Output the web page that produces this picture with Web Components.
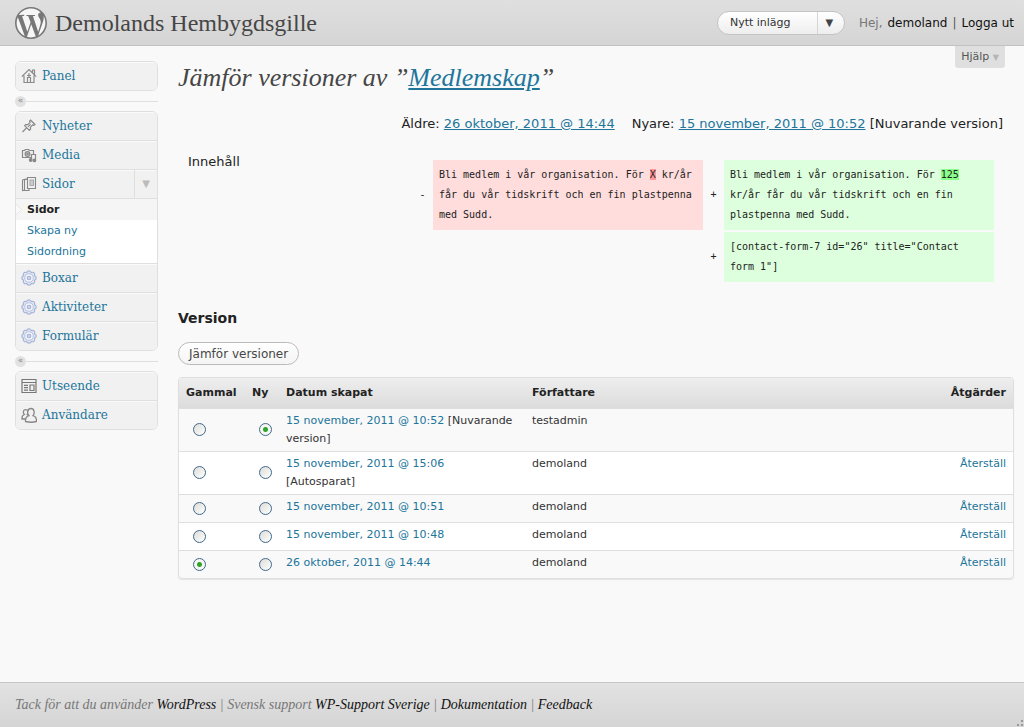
<!DOCTYPE html>
<html lang="sv">
<head>
<meta charset="utf-8">
<meta name="viewport" content="width=device-width, initial-scale=1">
<title>Jämför versioner ‹ Demolands Hembygdsgille</title>
<style>
  html, body { margin: 0; }
  body {
    --link: #21759b;
    --edge: #dfdfdf;
    --serif: "Liberation Serif", Georgia, serif;
    --slab: "DejaVu Serif", Georgia, serif;
    --sans: "DejaVu Sans", Verdana, sans-serif;
    --mono: "DejaVu Sans Mono", Consolas, monospace;
    background: #f9f9f9;
    color: #333;
    font: 11px/18px var(--sans);
  }
</style>
</head>
<body>
<admin-page></admin-page>

<script>
// markup is a string, or a function that builds it from the host element
const define = (name, markup) => customElements.define(name, class extends HTMLElement {
  connectedCallback() {
    if (this.shadowRoot) return;
    const template = document.createElement('template');
    template.innerHTML = typeof markup === 'function' ? markup(this) : markup;
    this.attachShadow({ mode: 'open' }).append(template.content.cloneNode(true));
  }
});

const ICONS = {
  home: `<g fill="none" stroke="#8a8a8a" stroke-width="1.2"><path d="M.8 8.700 8 1.500 15.200 8.700M3 7.500V14.500H13V7.500M11.500 4.500V2H13.500V7"/><path d="M6.500 14.500V9.500H9.500V14.500M6 7.500H10M8 5V9"/></g>`,
  pin: `<g fill="#f1f1f1" stroke="#888" stroke-width="1.2" stroke-linejoin="round"><path d="M1.500 14 6 9.300"/><path d="M9.500 2 14 6.500 12.600 7.400 11.600 6.800 9.400 9.400 9.600 11.200 8.400 12.400 3.600 7.600 4.900 6.500 6.700 6.600 9.200 4.400 8.600 3.200Z"/><path d="M7 8.800 9.600 6.400"/></g>`,
  media: `<g fill="none" stroke="#888" stroke-width="1.2"><path d="M1.500 3.500H3.500L4.500 2.500H7.500L8.500 3.500H12.500V10.500H1.500Z"/><circle cx="6.500" cy="7" r="2.400"/><circle cx="6.500" cy="7" r=".8"/><path d="M10.500 12.500V7.500H14.500V13" fill="#f1f1f1"/><circle cx="9.700" cy="13" r="1.300" fill="#888"/><circle cx="13.400" cy="13.400" r="1.300" fill="#888"/></g>`,
  pages: `<g fill="#f1f1f1" stroke="#888" stroke-width="1.1"><path d="M1.5 4 5 3V14L1.5 14.5Z"/><path d="M3.5 3.5H8V14.5H3.5Z"/><path d="M6.5 1.5H14.5V12.5H6.5Z"/><path d="M9 4H12.5V9.5H9Z" fill="#cfcfcf" stroke="#aaa"/></g>`,
  gear: `<g fill="#dfe5f4" stroke="#a3b1d3" stroke-width="1.1" stroke-linejoin="round"><path d="M8 .8Q9.800 1 10.300 2.500 12.200 1.800 13.100 2.900 14.200 4 13.500 5.700 15.200 6.300 15.200 8T13.500 10.300Q14.200 12 13.100 13.100 12 14.200 10.300 13.500 9.700 15.200 8 15.200T5.700 13.500Q4 14.200 2.900 13.100 1.800 12 2.500 10.300.8 9.700.8 8T2.500 5.700Q1.800 4 2.900 2.900 4 1.800 5.700 2.500 6.300.8 8 .8Z"/><circle cx="8" cy="8" r="4.300" fill="#f4f6fb" stroke="#b9c4df"/><circle cx="8" cy="8" r="1.800" fill="#cdd6ec"/></g>`,
  layout: `<g fill="none" stroke="#777" stroke-width="1.2"><path d="M1 1.5H15V14.5H1ZM1 4.5H15"/><path d="M9 7H13V12.5H9Z"/><path d="M3 7.3H7M3 9.7H7M3 12.1H7"/></g>`,
  users: `<g fill="#f1f1f1" stroke="#888" stroke-width="1.3"><path d="M1 12C.8 9.5 2 8 3.3 7.5 1.5 5.5 2.3 2.6 4.7 2.6S7.8 5.5 6.2 7.5C7.5 8 8.2 9 8.2 12Z"/><path d="M4.5 14.5C4.2 11.3 6 9.3 8 8.7 5.7 6.5 6.5 1.5 10 1.5S14 6.5 12 8.7C14 9.3 15.7 11.3 15.4 14.5Q10 16 4.5 14.5Z"/></g>`
};

define('ui-icon', el => `
  <style>:host{display:block;width:16px;height:16px;flex:none} svg{display:block}</style>
  <svg width="16" height="16" viewBox="0 0 16 16" aria-hidden="true">${ICONS[el.getAttribute('name')]}</svg>`);

define('menu-item', el => `
  <style>
    :host{display:block;border-top:1px solid var(--edge)}
    :host([first]){border-top:0}
    .row{display:flex;align-items:center;height:28px;padding-left:5px;background:#f1f1f1;box-shadow:inset 0 1px #fafafa}
    a{color:var(--link);text-decoration:none;font:12px/18px var(--slab);margin-left:5px;flex:1}
    button{width:23px;height:28px;border:0;border-left:1px solid var(--edge);background:none;color:#bbb;font:10px/20px var(--sans);padding:0}
  </style>
  <div class="row"><ui-icon name="${el.getAttribute('icon')}"></ui-icon><a href="#">${el.getAttribute('label')}</a>${el.hasAttribute('open') ? '<button aria-label="Visa undermeny">▼</button>' : ''}</div>
  <slot></slot>`);

define('sub-menu', `
  <style>
    :host{display:block;background:#fff;border-top:1px solid var(--edge);padding-bottom:1px}
    ul{list-style:none;margin:0;padding:0}
    li{position:relative}
    a{display:block;padding-left:11px;line-height:21px;color:var(--link);text-decoration:none}
    .current{background:#f5f5f5}
    .current a{color:#222;font-weight:bold}
    .current svg{position:absolute;left:-1px;top:4px}
  </style>
  <ul>
    <li class="current"><svg width="7" height="13" viewBox="0 0 7 13" aria-hidden="true"><path d="M0 0 6.5 6.5 0 13Z" fill="#f9f9f9"/><path d="M0 0 6.5 6.5 0 13" fill="none" stroke="#e6e6e6"/></svg><a href="#">Sidor</a></li>
    <li><a href="#">Skapa ny</a></li>
    <li><a href="#">Sidordning</a></li>
  </ul>`);

define('menu-group', `
  <style>:host{display:block;border:1px solid var(--edge);border-radius:6px;overflow:hidden}</style>
  <slot></slot>`);

define('menu-separator', `
  <style>
    :host{display:flex;align-items:center;height:20px}
    button{width:11px;height:11px;border:0;border-radius:6px;background:#e2e2e2;color:#888;font:9px/9px var(--sans);padding:0 0 1px}
    i{flex:1;height:1px;background:var(--edge)}
  </style>
  <button aria-label="Fäll ihop menyn">«</button><i></i>`);

define('admin-menu', `
  <style>:host{display:block;width:143px;flex:none;margin-top:15px}</style>
  <nav>
    <menu-group><menu-item first icon="home" label="Panel"></menu-item></menu-group>
    <menu-separator></menu-separator>
    <menu-group>
      <menu-item first icon="pin" label="Nyheter"></menu-item>
      <menu-item icon="media" label="Media"></menu-item>
      <menu-item icon="pages" label="Sidor" open><sub-menu></sub-menu></menu-item>
      <menu-item icon="gear" label="Boxar"></menu-item>
      <menu-item icon="gear" label="Aktiviteter"></menu-item>
      <menu-item icon="gear" label="Formulär"></menu-item>
    </menu-group>
    <menu-separator></menu-separator>
    <menu-group>
      <menu-item first icon="layout" label="Utseende"></menu-item>
      <menu-item icon="users" label="Användare"></menu-item>
    </menu-group>
  </nav>`);

define('admin-header', `
  <style>
    :host{display:block}
    header{display:flex;align-items:center;height:45px;padding:0 10px 0 15px;background:linear-gradient(#dfdfdf,#d5d5d5);border-bottom:1px solid #c2c2c2}
    svg{display:block;flex:none}
    h1{flex:1;margin:0 0 0 8px;font:24px/32px var(--serif);color:#464646}
    h1 a{color:inherit;text-decoration:none}
    .new{display:flex;align-items:center;height:22px;width:126px;margin-right:14px;border:1px solid #c4c4c4;border-radius:12px;background:linear-gradient(#fff,#eee);overflow:hidden}
    .new a{flex:1;padding-left:12px;color:#333;text-decoration:none}
    .new button{width:27px;height:22px;border:0;border-left:1px solid #d5d5d5;background:none;color:#444;font:10px/20px var(--sans);padding:0 3px 0 0}
    p{display:flex;gap:5px;margin:0;font-size:12px;color:#777}
    p a{color:#111;text-decoration:none}
    p i{font-style:normal;color:#555}
  </style>
  <header>
    <svg width="32" height="32" viewBox="0 0 24 24" aria-hidden="true"><circle cx="12" cy="12" r="11.5" fill="#f6f6f6"/><path fill="#777" d="M21.469 6.825c.84 1.537 1.318 3.3 1.318 5.175 0 3.979-2.156 7.456-5.363 9.325l3.295-9.527c.615-1.54.82-2.771.82-3.864 0-.405-.026-.78-.07-1.11m-7.981.105c.647-.03 1.232-.105 1.232-.105.582-.075.514-.93-.067-.899 0 0-1.755.135-2.88.135-1.064 0-2.85-.15-2.85-.15-.585-.03-.661.855-.075.885 0 0 .54.061 1.125.09l1.68 4.605-2.37 7.08L5.354 6.9c.649-.03 1.234-.1 1.234-.1.585-.075.516-.93-.065-.896 0 0-1.746.138-2.874.138-.2 0-.438-.008-.69-.015C4.911 3.15 8.235 1.215 12 1.215c2.809 0 5.365 1.072 7.286 2.833-.046-.003-.091-.009-.141-.009-1.06 0-1.812.923-1.812 1.914 0 .89.513 1.643 1.06 2.531.411.72.89 1.643.89 2.977 0 .915-.354 1.994-.821 3.479l-1.075 3.585-3.9-11.61.001.014zM12 22.784c-1.059 0-2.081-.153-3.048-.437l3.237-9.406 3.315 9.087c.024.053.05.101.078.149-1.12.393-2.325.609-3.582.609M1.211 12c0-1.564.336-3.05.935-4.39L7.29 21.709C3.694 19.96 1.212 16.271 1.211 12M12 0C5.385 0 0 5.385 0 12s5.385 12 12 12 12-5.385 12-12S18.615 0 12 0"/></svg>
    <h1><a href="#">Demolands Hembygdsgille</a></h1>
    <div class="new"><a href="#">Nytt inlägg</a><button aria-label="Fler val">▼</button></div>
    <p><span>Hej,</span> <a href="#">demoland</a> <i>|</i> <a href="#">Logga ut</a></p>
  </header>`);

define('revision-diff', `
  <style>
    :host{display:grid;grid-template-columns:224px 1fr;padding:0 20px 0 10px;font-size:13px;color:#222}
    .label{line-height:20px}
    table{width:100%;margin-top:6px;table-layout:fixed;border-spacing:0 2px;font:10px/20px var(--mono)}
    td{padding:5px 6px;vertical-align:top}
    td.sign{width:21px;padding:0;text-align:center;vertical-align:middle}
    .del{background:#fdd} .add{background:#dfd}
    del{background:#f99;text-decoration:none} ins{background:#8f8;text-decoration:none}
    .keep{white-space:nowrap}
  </style>
  <span class="label">Innehåll</span>
  <table>
    <tr><td class="sign">-</td><td class="del">Bli medlem i vår organisation. För <del>X</del> <span class="keep">kr/år</span> får du vår tidskrift och en fin plastpenna med Sudd.</td><td class="sign">+</td><td class="add">Bli medlem i vår organisation. För <ins>125</ins> <span class="keep">kr/år</span> får du vår tidskrift och en fin plastpenna med Sudd.</td></tr>
    <tr><td class="sign"></td><td></td><td class="sign">+</td><td class="add">[contact-form-7 id="26" title="Contact form 1"]</td></tr>
  </table>`);

const REVISIONS = [
  ['15 november, 2011 @ 10:52', '[Nuvarande version]', 'testadmin', false, false, true],
  ['15 november, 2011 @ 15:06', '[Autosparat]', 'demoland', true, false, false],
  ['15 november, 2011 @ 10:51', '', 'demoland', true, false, false],
  ['15 november, 2011 @ 10:48', '', 'demoland', true, false, false],
  ['26 oktober, 2011 @ 14:44', '', 'demoland', true, true, false]
];

const revisionRow = ([date, note, author, restore, old, fresh]) => `
  <tr><td class="radio"><input type="radio" name="left" aria-label="Gammal: ${date}"${old ? ' checked' : ''}></td>
  <td class="radio"><input type="radio" name="right" aria-label="Ny: ${date}"${fresh ? ' checked' : ''}></td>
  <td class="when"><a href="#">${date}</a> ${note}</td><td>${author}</td>
  <td class="right">${restore ? '<a href="#">Återställ</a>' : ''}</td></tr>`;

define('revision-table', () => `
  <style>
    :host{display:block;border:1px solid var(--edge);border-radius:4px;overflow:hidden;box-shadow:0 1px 1px #e4e4e4}
    table{width:100%;table-layout:fixed;border-collapse:collapse}
    th{box-sizing:border-box;height:30px;padding:0 7px;text-align:left;color:#222;white-space:nowrap}
    thead{background:linear-gradient(#eee,#dcdcdc)}
    td{padding:3px 7px;vertical-align:top;border-top:1px solid var(--edge)}
    tbody tr{height:28px}
    tbody tr:nth-child(even){background:#fff}
    .old{width:66px} .new{width:34px} .date{width:246px}
    .when{padding-right:10px}
    .radio{vertical-align:middle;padding-top:0;padding-bottom:0}
    .right{text-align:right}
    input{display:block;appearance:none;box-sizing:border-box;width:13px;height:13px;margin:0 0 0 7px;border:1px solid #41698c;border-radius:7px;background:linear-gradient(135deg,#dcdcd8,#fff)}
    input:checked{background:radial-gradient(circle,#2fa52a 0 2px,#f6f6f4 3px)}
    a{color:var(--link);text-decoration:none}
  </style>
  <table>
    <thead><tr><th class="old">Gammal</th><th class="new">Ny</th><th class="date">Datum skapat</th><th>Författare</th><th class="right">Åtgärder</th></tr></thead>
    <tbody>${REVISIONS.map(revisionRow).join('')}</tbody>
  </table>`);

define('revision-view', `
  <style>
    :host{display:block;flex:1;min-width:0}
    .top{display:flex;align-items:flex-start}
    h2{flex:1;margin:16px 0 0;font:italic 26px/32px var(--serif);color:#464646}
    a{color:var(--link)}
    .help{border:0;border-radius:0 0 3px 3px;margin-right:9px;padding:0 6px;height:22px;background:#dfdfdf;color:#555;font:11px/22px var(--sans)}
    .help span{color:#b4b4b4;font-size:8px}
    .pair{display:flex;justify-content:flex-end;gap:17px;margin:20px 11px 18px 0;font-size:13px;line-height:20px;color:#222}
    h3{margin:24px 0 14px;font:bold 14px/20px var(--sans);color:#222}
    .compare{display:block;height:23px;margin-bottom:12px;padding:0 10px;border:1px solid #bbb;border-radius:12px;background:linear-gradient(#fff,#f4f4f4);color:#464646;font:12px/20px var(--sans)}
  </style>
  <main>
    <div class="top"><h2>Jämför versioner av ”<a href="#">Medlemskap</a>”</h2><button class="help">Hjälp <span>▼</span></button></div>
    <div class="pair"><span>Äldre: <a href="#">26 oktober, 2011 @ 14:44</a></span><span>Nyare: <a href="#">15 november, 2011 @ 10:52</a> [Nuvarande version]</span></div>
    <revision-diff></revision-diff>
    <h3>Version</h3>
    <button class="compare">Jämför versioner</button>
    <revision-table></revision-table>
  </main>`);

define('admin-footer', `
  <style>
    :host{display:block;position:relative}
    footer{min-height:44px;padding:0 15px;border-top:1px solid #c6c6c6;background:linear-gradient(#e2e2e2,#d5d5d5);font:italic 14px/44px var(--serif);color:#777}
    a{color:#111;text-decoration:none}
    svg{position:absolute;right:0;bottom:0}
  </style>
  <footer>Tack för att du använder <a href="#">WordPress</a> | Svensk support <a href="#">WP-Support Sverige</a> | <a href="#">Dokumentation</a> | <a href="#">Feedback</a></footer>
  <svg width="8" height="8" viewBox="0 0 8 8" aria-hidden="true"><path fill="#999" d="M5 1h2v2H5zM5 5h2v2H5zM1 5h2v2H1z"/></svg>`);

define('admin-page', `
  <style>
    :host{display:flex;flex-direction:column;min-height:100vh}
    .body{flex:1;display:flex;gap:20px;padding:0 10px 20px 15px}
  </style>
  <admin-header></admin-header>
  <div class="body"><admin-menu></admin-menu><revision-view></revision-view></div>
  <admin-footer></admin-footer>`);
</script>
</body>
</html>
